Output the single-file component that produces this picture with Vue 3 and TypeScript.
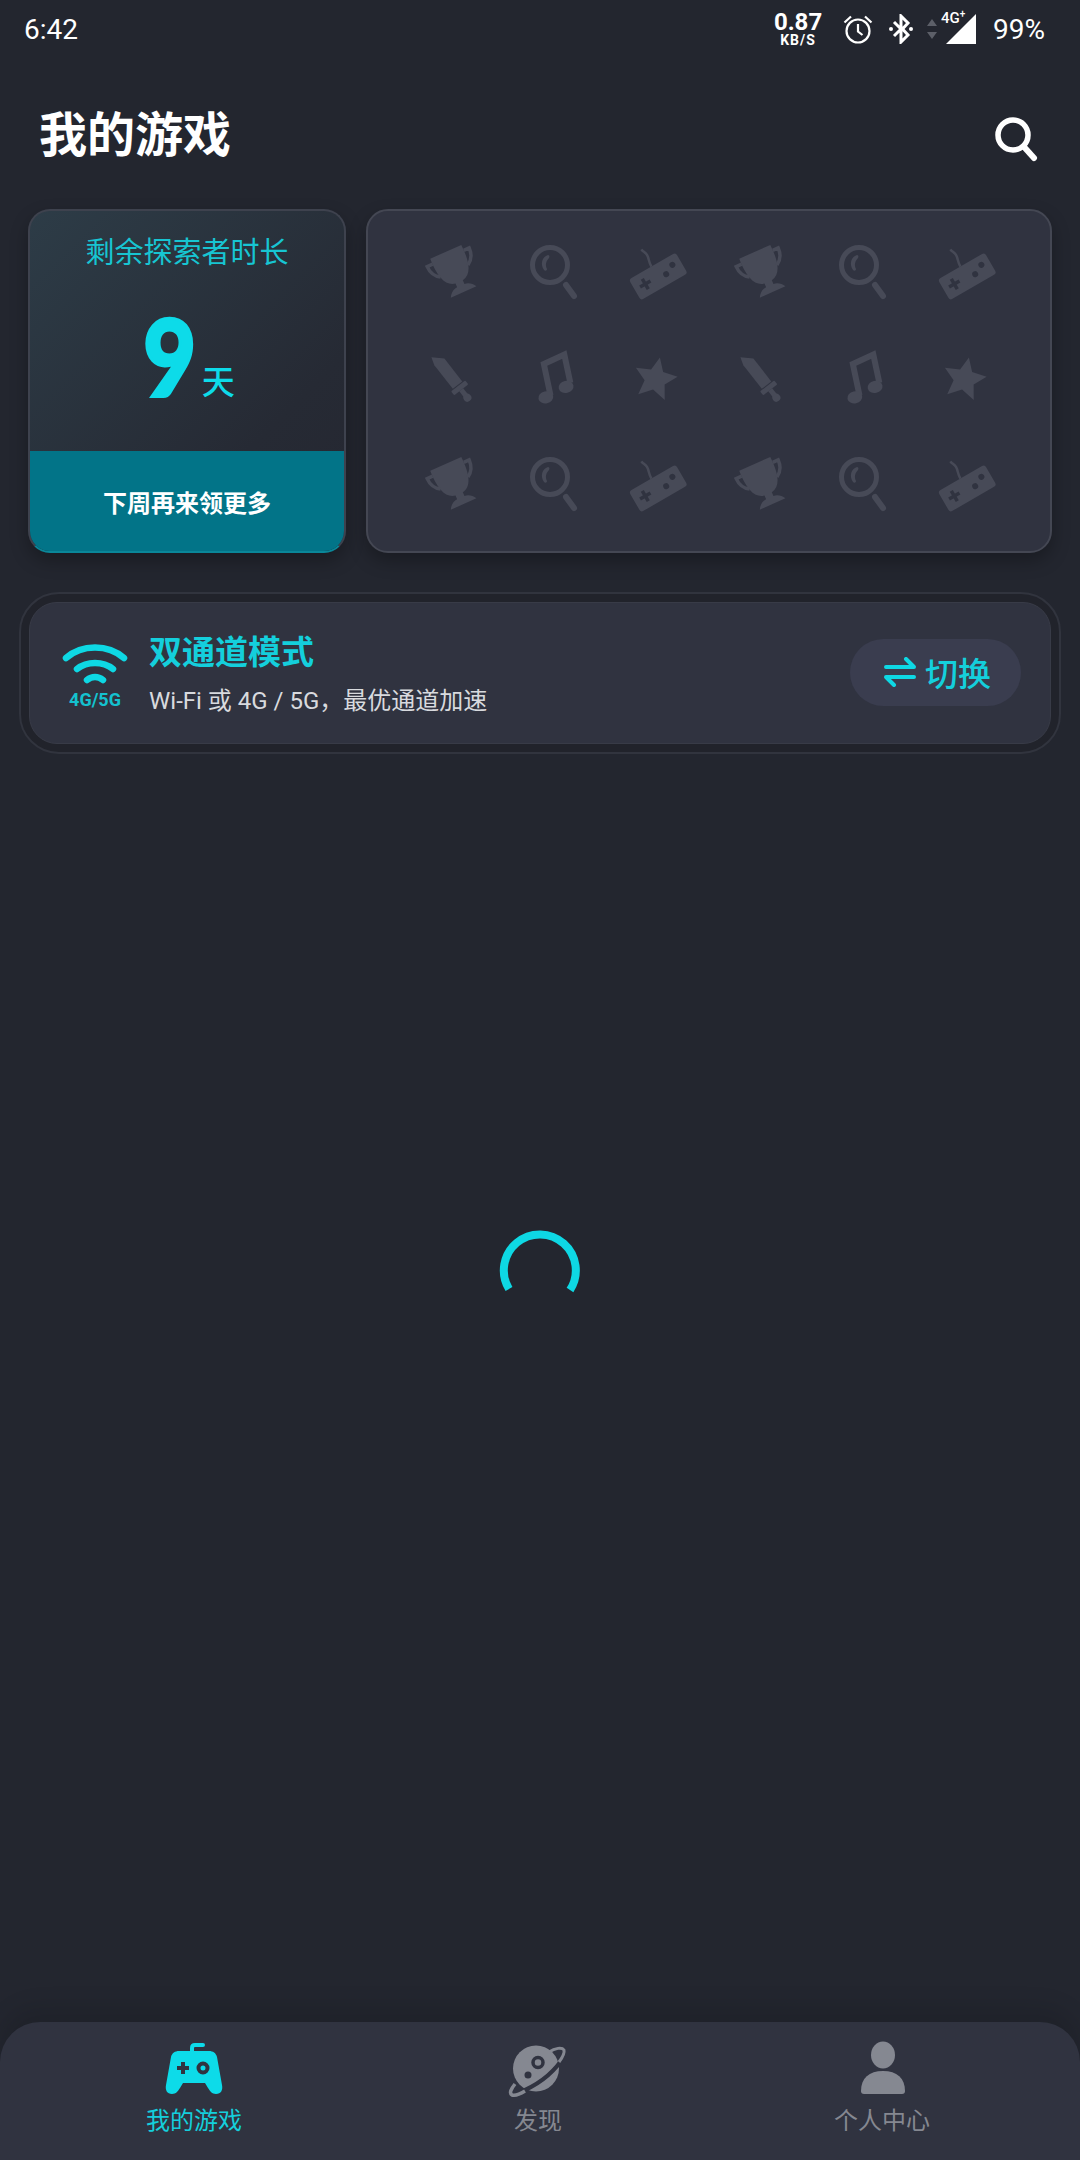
<template>
  <div class="page">
    <!-- 状态栏 -->
    <div class="status-bar">
      <span class="time">6:42</span>
      <div class="status-right">
        <div class="speed"><b>0.87</b><small>KB/S</small></div>
        <svg class="st-alarm" width="32" height="32" viewBox="0 0 32 32" fill="none" stroke="#fff" stroke-width="2.2">
          <circle cx="16" cy="18" r="11.5" />
          <path d="M16 11v7.5l4.5 3.5M2.5 9.5 9 3.5M29.500 9.500 23 3.500" />
        </svg>
        <svg class="st-bt" width="26" height="30" viewBox="0 0 26 30">
          <path d="M13 2l7 7-5.500 6 5.500 6-7 7zM13 15 6 8M13 15l-7 7" fill="none" stroke="#fff" stroke-width="3" />
          <circle cx="3" cy="15" r="2" fill="#fff" />
          <circle cx="23" cy="15" r="2" fill="#fff" />
        </svg>
        <svg class="st-arrows" width="12" height="22" viewBox="0 0 12 22" fill="#5c5f68">
          <path d="M6 1l5 7H1zM6 21l-5-7h10z" />
        </svg>
        <div class="signal">
          <span>4G<sup>+</sup></span>
          <svg width="32" height="32" viewBox="0 0 32 32"><path d="M31 1v30H1z" fill="#fff" /></svg>
        </div>
        <span class="battery">99%</span>
      </div>
    </div>

    <!-- 标题 -->
    <div class="header">
      <h1>我的游戏</h1>
      <svg width="44" height="46" viewBox="0 0 44 46" fill="none" stroke="#fff" stroke-linecap="round">
        <circle cx="19" cy="19" r="15" stroke-width="5.500" />
        <path d="M31 32l9 10" stroke-width="6" />
      </svg>
    </div>

    <div class="cards">
      <div class="time-card">
        <div class="time-top">
          <div class="time-label">剩余探索者时长</div>
          <div class="time-value"><span class="num">9</span><span class="unit">天</span></div>
        </div>
        <div class="time-bottom">下周再来领更多</div>
      </div>
      <div class="icons-card">
        <svg v-for="(it, i) in patternIcons" :key="i" class="pattern-icon" width="60" height="60" viewBox="0 0 60 60" :style="{ transform: `rotate(${rotations[it]}deg)` }">
          <use :href="`#ic-${it}`" />
        </svg>
      </div>
    </div>

    <div class="dual-wrap">
      <div class="dual">
        <div class="dual-icon">
          <svg width="66" height="46" viewBox="0 0 66 46" fill="none" stroke="#0ed8e4" stroke-width="6.500" stroke-linecap="round">
            <path d="M4 17C20 3 46 3 62 17" />
            <path d="M15 28c10-8 26-8 36 0" />
            <path d="M25 39c5-4 11-4 16 0" />
          </svg>
          <span>4G/5G</span>
        </div>
        <div class="dual-text">
          <div class="dual-title">双通道模式</div>
          <div class="dual-sub">Wi-Fi 或 4G / 5G，最优通道加速</div>
        </div>
        <div class="switch-btn">
          <svg width="32" height="30" viewBox="0 0 32 30" fill="none" stroke="#0ed8e4" stroke-width="4" stroke-linecap="round" stroke-linejoin="round">
            <path d="M2 10h28l-8-8M30 20H2l8 8" />
          </svg>
          <span>切换</span>
        </div>
      </div>
    </div>

    <div class="loading">
      <svg width="84" height="84" viewBox="0 0 84 84" fill="none" stroke="#0ed8e4" stroke-width="8">
        <path d="M11 60A36 36 0 1 1 72 61" />
      </svg>
    </div>

    <div class="tabbar">
      <div v-for="tab in tabs" :key="tab.name" class="tab" :class="{ active: tab.active }">
        <svg width="60" height="56" viewBox="0 0 60 56">
          <use :href="`#tab-${tab.icon}`" />
        </svg>
        <span>{{ tab.name }}</span>
      </div>
    </div>

    <svg class="defs" width="0" height="0">
      <defs>
        <symbol id="ic-trophy" viewBox="0 0 60 60">
          <g transform="translate(2.500 1)">
            <path d="M13 8h34c1 20-3 31-13 33v4c4 0 8 3 10 7H16c2-4 6-7 10-7v-4C16 39 12 28 13 8z" fill="#474a57" />
            <path d="M13 14H7c0 7 3 12 8 15M47 14h6c0 7-3 12-8 15" fill="none" stroke="#474a57" stroke-width="3.500" />
          </g>
        </symbol>
        <symbol id="ic-magnifier" viewBox="0 0 60 60">
          <circle cx="25" cy="23" r="17.500" fill="none" stroke="#474a57" stroke-width="5" />
          <path d="M23 13c-6 2-8 9-4 15 1 1 3 1 3-1-2-4-1-8 2-11 1-2 0-3-1-3z" fill="#474a57" />
          <path d="M41 43l8 11" stroke="#474a57" stroke-width="6" stroke-linecap="round" />
        </symbol>
        <symbol id="ic-controller" viewBox="0 0 60 60">
          <g transform="translate(-2 -4)">
            <rect x="3" y="26" width="54" height="24" rx="3" fill="#474a57" />
            <path d="M29 26c0-6 2-8 2-12s-2-5-2-8" fill="none" stroke="#474a57" stroke-width="2.500" />
            <path d="M15 32v12M9 38h12" stroke="#303340" stroke-width="3.500" />
            <circle cx="38" cy="40" r="3" fill="#303340" />
            <circle cx="48" cy="35" r="3" fill="#303340" />
          </g>
        </symbol>
        <symbol id="ic-sword" viewBox="0 0 60 60">
          <path d="M26.500 1l9.500 9v29H24V9z" fill="#474a57" />
          <rect x="21" y="40" width="18" height="5" rx="1" fill="#474a57" />
          <rect x="27.500" y="45" width="5" height="9" fill="#474a57" />
          <circle cx="30" cy="55" r="4" fill="#474a57" />
        </symbol>
        <symbol id="ic-note" viewBox="0 0 60 60">
          <path d="M22 46V14l22-5v29" fill="none" stroke="#474a57" stroke-width="6" />
          <ellipse cx="17" cy="47" rx="7.500" ry="6" fill="#474a57" />
          <ellipse cx="39" cy="41" rx="7.500" ry="6" fill="#474a57" />
        </symbol>
        <symbol id="ic-star" viewBox="0 0 60 60">
          <path d="M30 5l7.500 16.500 18.500 2-13.500 12.500 4 18.500L30 45l-16.500 9.500 4-18.500L4 23.500l18.500-2z" fill="#474a57" transform="translate(3 5.400) scale(.82)" />
        </symbol>
        <symbol id="tab-game" viewBox="0 0 60 56">
          <path d="M28 12V7c0-2 1-3 3-3h8" fill="none" stroke="#0ddbe9" stroke-width="4" stroke-linecap="round" />
          <path d="M15 10h30c4 0 7 2 8 6l5 28c1 5-1 9-6 9-4 0-6-3-8-6l-3-5H19l-3 5c-2 3-4 6-8 6-5 0-7-4-6-9l5-28c1-4 4-6 8-6z" fill="#0ddbe9" />
          <path d="M19 21v12M13 27h12" stroke="#303340" stroke-width="4" />
          <circle cx="39" cy="27" r="4.500" fill="none" stroke="#303340" stroke-width="4" />
        </symbol>
        <symbol id="tab-planet" viewBox="0 0 60 56">
          <circle cx="28" cy="27.500" r="23" fill="#858891" />
          <path d="M53 20Q38 41 10 52" fill="none" stroke="#303340" stroke-width="4" />
          <path d="M41 11c6-4 13-5 15-2 1 4-2 8-5 12" fill="none" stroke="#858891" stroke-width="3" />
          <path d="M7 43c-4 5-6 9-3 11 3 1 8-1 13-4" fill="none" stroke="#858891" stroke-width="3.500" />
          <circle cx="30" cy="21.500" r="5" fill="#858891" stroke="#303340" stroke-width="3.500" />
          <circle cx="20" cy="34" r="3.500" fill="#303340" />
        </symbol>
        <symbol id="tab-person" viewBox="0 0 60 56">
          <ellipse cx="31" cy="14" rx="12" ry="13.500" fill="#858891" />
          <path d="M9 50c0-13 8-20 22-20s22 7 22 20c0 2-1 3-3 3H12c-2 0-3-1-3-3z" fill="#858891" />
        </symbol>
      </defs>
    </svg>
  </div>
</template>

<script setup lang="ts">
type PatternIcon = 'trophy' | 'magnifier' | 'controller' | 'sword' | 'note' | 'star'

const rotations: Record<PatternIcon, number> = {
  trophy: -24,
  magnifier: 0,
  controller: -30,
  sword: -38,
  note: -12,
  star: 12
}

const rowA: PatternIcon[] = ['trophy', 'magnifier', 'controller', 'trophy', 'magnifier', 'controller']
const rowB: PatternIcon[] = ['sword', 'note', 'star', 'sword', 'note', 'star']
const patternIcons = [...rowA, ...rowB, ...rowA]

const tabs = [
  { name: '我的游戏', icon: 'game', active: true },
  { name: '发现', icon: 'planet', active: false },
  { name: '个人中心', icon: 'person', active: false }
]
</script>

<style>
html,
body {
  margin: 0;
  background: #23262f;
}
</style>

<style scoped>
.page {
  width: 1080px;
  height: 2160px;
  display: flex;
  flex-direction: column;
  background: #23262f;
  color: #fff;
  font-family: Roboto, "Noto Sans CJK SC", sans-serif;
  overflow: hidden;
}

.defs {
  position: absolute;
}

.status-bar {
  height: 58px;
  padding: 0 35px 0 24px;
  display: flex;
  align-items: center;
  justify-content: space-between;
}

.time {
  font-size: 28px;
}

.status-right {
  display: flex;
  align-items: center;
}

.speed {
  width: 48px;
  display: flex;
  flex-direction: column;
  align-items: center;
  line-height: 1;
}

.speed b {
  font-size: 24px;
  line-height: 22px;
}

.speed small {
  font-size: 14px;
  font-weight: 700;
  letter-spacing: 1px;
  line-height: 15px;
}

.st-alarm {
  margin-left: 20px;
}

.st-bt {
  margin-left: 14px;
}

.st-arrows {
  margin-left: 12px;
}

.signal {
  position: relative;
  width: 32px;
  height: 32px;
  margin-left: 7px;
}

.signal svg {
  display: block;
}

.signal span {
  position: absolute;
  left: -4px;
  top: -4px;
  font-size: 15px;
  font-weight: 500;
  line-height: 18px;
}

.signal sup {
  font-size: 10px;
  line-height: 0;
}

.battery {
  margin-left: 16px;
  font-size: 28px;
}

.header {
  height: 151px;
  padding: 0 39px;
  box-sizing: border-box;
  display: flex;
  align-items: center;
  justify-content: space-between;
}

.header h1 {
  margin: 0 0 -4px;
  font-size: 48px;
  font-weight: 700;
  line-height: 64px;
}

.header svg {
  margin-top: 11px;
  margin-right: 3px;
}

.cards {
  display: flex;
  gap: 20px;
  padding: 0 28px;
  height: 344px;
}

.time-card {
  width: 318px;
  box-sizing: border-box;
  display: flex;
  flex-direction: column;
  border: 2px solid #3e424e;
  border-bottom-color: #0a8799;
  border-radius: 22px;
  overflow: hidden;
  background: linear-gradient(135deg, #2d3c47 0%, #262a34 70%, #252731 100%);
  box-shadow: 0 8px 18px rgba(0, 0, 0, 0.28);
}

.time-top {
  flex: 1;
  display: flex;
  flex-direction: column;
  align-items: center;
}

.time-label {
  margin-top: 22px;
  font-size: 29px;
  line-height: 40px;
  color: #17c5d2;
}

.time-value {
  margin-top: 28px;
  margin-left: 3px;
  display: flex;
  align-items: baseline;
  color: #0ddbe9;
}

.num {
  display: inline-block;
  font-family: Lato, sans-serif;
  font-size: 106px;
  font-weight: 900;
  line-height: 104px;
  margin: 0 -3px;
  transform: translateY(3px) scaleX(0.86);
  -webkit-text-stroke: 3px #0ddbe9;
}

.unit {
  margin-left: 4px;
  font-size: 33px;
  font-weight: 500;
  line-height: 40px;
}

.time-bottom {
  height: 100px;
  margin: 0 -2px;
  display: flex;
  align-items: center;
  justify-content: center;
  background: #027488;
  font-size: 24px;
  font-weight: 700;
}

.icons-card {
  flex: 1;
  box-sizing: border-box;
  padding: 0 0 6px 0;
  display: grid;
  grid-template-columns: repeat(6, 103px);
  grid-template-rows: repeat(3, 106px);
  justify-content: center;
  place-items: center;
  align-content: center;
  border: 2px solid #444753;
  border-radius: 22px;
  background: #303340;
  box-shadow: 0 8px 18px rgba(0, 0, 0, 0.28);
}

.pattern-icon {
  display: block;
}

.dual-wrap {
  margin: 39px 19px 0;
  padding: 8px;
  border: 2px solid #31343e;
  border-radius: 40px;
  background: #21232b;
}

.dual {
  height: 140px;
  padding: 0 29px 0 32px;
  display: flex;
  align-items: center;
  border: 1px solid #383b47;
  border-radius: 28px;
  background: #303340;
}

.dual-icon {
  width: 66px;
  margin-top: 5px;
  display: flex;
  flex-direction: column;
  align-items: center;
}

.dual-icon svg {
  display: block;
}

.dual-icon span {
  margin-top: 2px;
  font-size: 18px;
  font-weight: 700;
  line-height: 22px;
  color: #14c2cf;
  white-space: nowrap;
}

.dual-text {
  flex: 1;
  margin-left: 21px;
  margin-top: 3px;
}

.dual-title {
  font-size: 33px;
  font-weight: 700;
  line-height: 44px;
  color: #14cfdc;
}

.dual-sub {
  margin-top: 8px;
  font-size: 24px;
  line-height: 36px;
  color: #d8dade;
}

.switch-btn {
  width: 171px;
  height: 67px;
  margin-top: -2px;
  padding-left: 4px;
  box-sizing: border-box;
  display: flex;
  align-items: center;
  justify-content: center;
  gap: 9px;
  border-radius: 34px;
  background: #3a3d4f;
  color: #14cfdc;
  font-size: 33px;
  font-weight: 500;
}

.loading {
  flex: 1;
  padding-bottom: 234px;
  display: flex;
  align-items: center;
  justify-content: center;
}

.tabbar {
  height: 138px;
  display: grid;
  grid-template-columns: repeat(3, 344px);
  padding: 0 22px;
  border-radius: 40px 40px 0 0;
  background: #303340;
  box-shadow: 0 -14px 24px rgba(0, 0, 0, 0.12);
}

.tab {
  padding-top: 19px;
  display: flex;
  flex-direction: column;
  align-items: center;
  font-size: 24px;
  line-height: 34px;
  color: #858891;
}

.tab svg {
  display: block;
  margin-bottom: 7px;
}

.tab.active {
  color: #14cfdc;
}
</style>
